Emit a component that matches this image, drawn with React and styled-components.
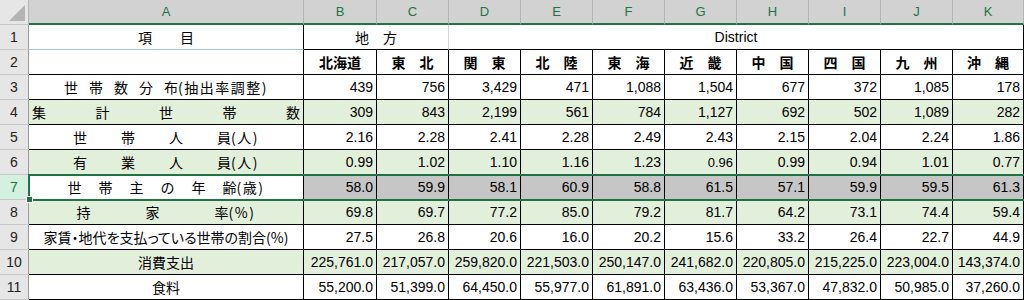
import React from 'react';
import styled, { createGlobalStyle } from 'styled-components';

const GREEN = '#217346';
const ROW_GREEN = '#e2efda';
const SELECTED = '#c6c6c6';

const GlobalStyle = createGlobalStyle`
  html, body {
    margin: 0;
    padding: 0;
    background: #fff;
  }
  body {
    font-family: "Noto Sans CJK JP", "Liberation Sans", sans-serif;
    overflow: hidden;
  }
`;

const Sheet = styled.div`
  position: relative;
  display: grid;
  grid-template-columns: 29px 275px 73px repeat(8, 72px) 71px;
  grid-auto-rows: 25px;
  width: 1024px;
  height: 300px;
  overflow: hidden;
`;

const Corner = styled.div`
  box-sizing: border-box;
  background: #e6e6e6;
  border-right: 1px solid #b4b4b4;
  border-bottom: 1px solid #c8c8c8;
  display: flex;
  align-items: flex-end;
  justify-content: flex-end;
  padding: 0 3px 3px 0;
`;

const ColHead = styled.div`
  box-sizing: border-box;
  background: #d2d2d2;
  color: ${GREEN};
  font-family: "Liberation Sans", Arial, sans-serif;
  font-size: 13px;
  display: flex;
  align-items: center;
  justify-content: center;
  border-right: 1px solid #b4b4b4;
  border-bottom: 2px solid ${GREEN};
`;

const RowHead = styled.div`
  box-sizing: border-box;
  background: ${(p) => (p.$active ? '#d3f0e0' : '#e6e6e6')};
  color: ${(p) => (p.$active ? GREEN : '#222')};
  font-family: "Liberation Sans", Arial, sans-serif;
  font-size: 14px;
  display: flex;
  align-items: center;
  justify-content: center;
  border-right: 1px solid #9b9b9b;
  border-bottom: 1px solid #c8c8c8;
`;

const Cell = styled.div`
  box-sizing: border-box;
  grid-column: span ${(p) => p.$span || 1};
  background: ${(p) => p.$bg || '#fff'};
  border-right: 1px solid ${(p) => p.$right || '#000'};
  border-bottom: 1px solid ${(p) => p.$bottom || '#000'};
  display: flex;
  align-items: center;
  justify-content: ${(p) => p.$justify || 'center'};
  padding: 0 ${(p) => p.$pad || 0}px;
  font-size: 14px;
  font-weight: ${(p) => (p.$bold ? 700 : 400)};
  font-feature-settings: ${(p) => (p.$palt ? '"palt"' : 'normal')};
  color: #000;
  white-space: nowrap;
  overflow: hidden;
`;

const Latin = styled.span`
  font-family: "Liberation Sans", Arial, sans-serif;
`;

const Num = styled(Cell)`
  justify-content: flex-end;
  padding-right: 3px;
  font-family: "Liberation Sans", Arial, sans-serif;
  font-size: ${(p) => (p.$small ? 13 : 14)}px;
`;

const Spread = styled.span`
  display: inline-flex;
  gap: ${(p) => p.$gap}px;
`;

const Suffix = styled.span`
  letter-spacing: 1.5px;
`;

const Selection = styled.div`
  position: absolute;
  top: 174px;
  left: 28px;
  width: 1010px;
  height: 27px;
  box-sizing: border-box;
  border: 2px solid ${GREEN};
  pointer-events: none;
`;

const FillHandle = styled.div`
  position: absolute;
  top: 196px;
  left: 26px;
  width: 7px;
  height: 7px;
  box-sizing: border-box;
  background: ${GREEN};
  border: 1px solid #fff;
`;

const COLS = ['A', 'B', 'C', 'D', 'E', 'F', 'G', 'H', 'I', 'J', 'K'];
const REGIONS = ['北海道', '東　北', '関　東', '北　陸', '東　海', '近　畿', '中　国', '四　国', '九　州', '沖　縄'];

const ROWS = [
  {
    label: { type: 'spread', text: '世帯数分布', gap: 11, suffix: '(抽出率調整)' },
    values: ['439', '756', '3,429', '471', '1,088', '1,504', '677', '372', '1,085', '178'],
  },
  {
    label: { type: 'justify', text: '集計世帯数' },
    bg: ROW_GREEN,
    values: ['309', '843', '2,199', '561', '784', '1,127', '692', '502', '1,089', '282'],
  },
  {
    label: { type: 'spread', text: '世帯人員', gap: 34, suffix: '(人)' },
    values: ['2.16', '2.28', '2.41', '2.28', '2.49', '2.43', '2.15', '2.04', '2.24', '1.86'],
  },
  {
    label: { type: 'spread', text: '有業人員', gap: 34, suffix: '(人)' },
    bg: ROW_GREEN,
    values: ['0.99', '1.02', '1.10', '1.16', '1.23', '0.96', '0.99', '0.94', '1.01', '0.77'],
    small: [5],
  },
  {
    label: { type: 'spread', text: '世帯主の年齢', gap: 17, suffix: '(歳)' },
    bg: SELECTED,
    labelBg: '#fff',
    active: true,
    values: ['58.0', '59.9', '58.1', '60.9', '58.8', '61.5', '57.1', '59.9', '59.5', '61.3'],
  },
  {
    label: { type: 'spread', text: '持家率', gap: 55, suffix: '(%)' },
    bg: ROW_GREEN,
    values: ['69.8', '69.7', '77.2', '85.0', '79.2', '81.7', '64.2', '73.1', '74.4', '59.4'],
  },
  {
    label: { type: 'plain', text: '家賃・地代を支払っている世帯の割合(%)', palt: true },
    values: ['27.5', '26.8', '20.6', '16.0', '20.2', '15.6', '33.2', '26.4', '22.7', '44.9'],
  },
  {
    label: { type: 'plain', text: '消費支出' },
    bg: ROW_GREEN,
    values: ['225,761.0', '217,057.0', '259,820.0', '221,503.0', '250,147.0', '241,682.0', '220,805.0', '215,225.0', '223,004.0', '143,374.0'],
  },
  {
    label: { type: 'plain', text: '食料' },
    values: ['55,200.0', '51,399.0', '64,450.0', '55,977.0', '61,891.0', '63,436.0', '53,367.0', '47,832.0', '50,985.0', '37,260.0'],
  },
];

const Label = ({ label, bg }) => {
  if (label.type === 'justify') {
    return (
      <Cell $bg={bg} $justify="space-between" $pad={3}>
        {label.text.split('').map((c, i) => (
          <span key={i}>{c}</span>
        ))}
      </Cell>
    );
  }
  if (label.type === 'spread') {
    return (
      <Cell $bg={bg}>
        <Spread $gap={label.gap}>
          {label.text.split('').map((c, i) => (
            <span key={i}>{c}</span>
          ))}
        </Spread>
        <Suffix>{label.suffix}</Suffix>
      </Cell>
    );
  }
  return (
    <Cell $bg={bg} $palt={label.palt}>
      {label.text}
    </Cell>
  );
};

const CornerMark = () => (
  <svg width="16" height="16" viewBox="0 0 16 16">
    <polygon points="16,0 16,16 0,16" fill="#b4b4b4" />
  </svg>
);

export default function App() {
  return (
    <>
      <GlobalStyle />
      <Sheet>
        <Corner>
          <CornerMark />
        </Corner>
        {COLS.map((c) => (
          <ColHead key={c}>{c}</ColHead>
        ))}

        <RowHead>1</RowHead>
        <Cell $bottom="#a6c0d8">項　　目</Cell>
        <Cell $span={2} $right="#d4d4d4">地　方</Cell>
        <Cell $span={8}>
          <Latin>District</Latin>
        </Cell>

        <RowHead>2</RowHead>
        <Cell />
        {REGIONS.map((r) => (
          <Cell key={r} $bold>
            {r}
          </Cell>
        ))}

        {ROWS.map((row, i) => (
          <React.Fragment key={i}>
            <RowHead $active={row.active}>{i + 3}</RowHead>
            <Label label={row.label} bg={row.labelBg || row.bg} />
            {row.values.map((v, j) => (
              <Num key={j} $bg={row.bg} $small={row.small && row.small.includes(j)}>
                {v}
              </Num>
            ))}
          </React.Fragment>
        ))}

        <Selection />
        <FillHandle />
      </Sheet>
    </>
  );
}
